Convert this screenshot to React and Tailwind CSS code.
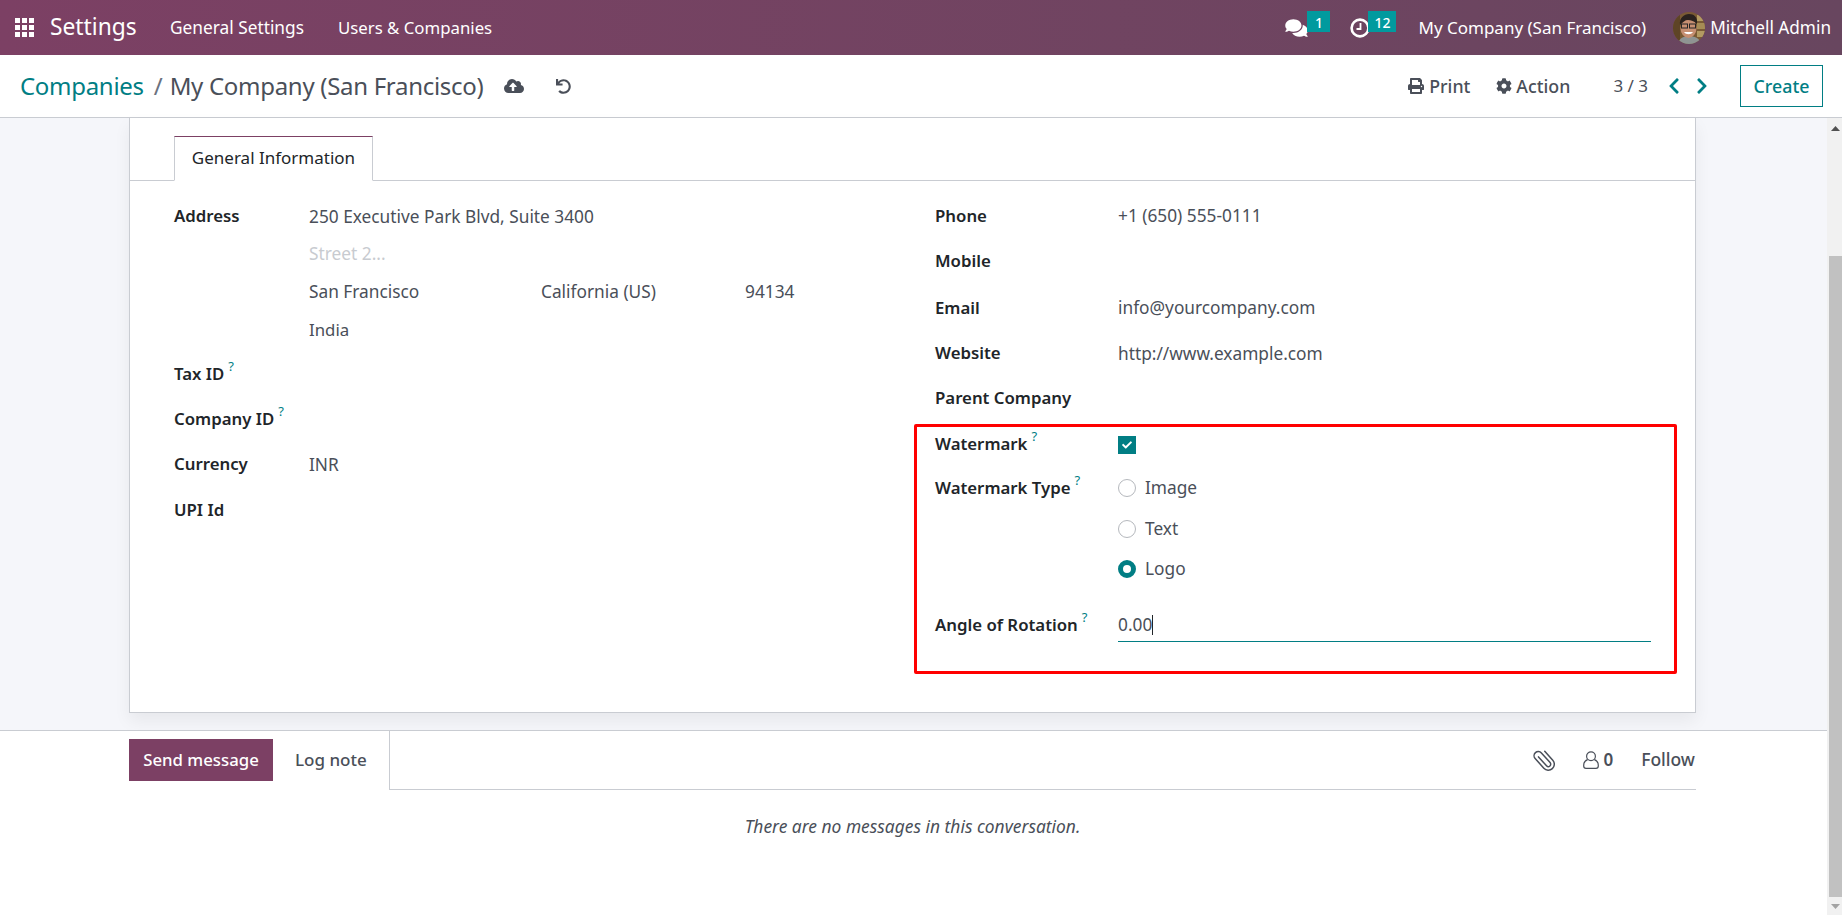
import React from 'react';
import { FaComments, FaPrint, FaCog, FaChevronLeft, FaChevronRight, FaCloudUploadAlt, FaUndo, FaCheck } from 'react-icons/fa';

const F = { fontFamily: '"Noto Sans", sans-serif' };

function Help() {
  return <sup className="text-[13px] font-normal text-[#017e84] ml-[4px] relative -top-[9px]">?</sup>;
}

function Avatar() {
  return (
    <svg viewBox="0 0 32 32" className="w-[32px] h-[32px] rounded-full mr-[5px]">
      <rect width="32" height="32" fill="#7a5a34" />
      <rect x="0" y="0" width="7" height="32" fill="#5e4426" />
      <rect x="24" y="3" width="8" height="6" fill="#b39a62" />
      <rect x="24" y="11" width="8" height="6" fill="#a68c55" />
      <rect x="24" y="19" width="8" height="6" fill="#b39a62" />
      <path d="M5 32c1-6 6-8 11-8s11 2 12 8z" fill="#8f9493" />
      <ellipse cx="15.5" cy="16" rx="8" ry="10" fill="#c68f72" />
      <path d="M7 13c-1-7 4-11 9-11s9 3 8 10c-3-3-6-4-9-4s-5 2-8 5z" fill="#2a221e" />
      <rect x="8.5" y="12" width="6" height="4" fill="none" stroke="#262626" strokeWidth="1" />
      <rect x="16.5" y="12" width="6" height="4" fill="none" stroke="#262626" strokeWidth="1" />
      <path d="M11 20c2 3 7 3 9 0z" fill="#fff" />
    </svg>
  );
}

function Badge({ children, className }) {
  return <span className={"absolute top-[11px] h-[21px] pt-[1px] bg-[#019a9e] text-white text-[14px] font-medium flex items-center justify-center " + className}>{children}</span>;
}

function ClockIcon({ className }) {
  return (
    <svg viewBox="0 0 20 20" className={className} fill="none" stroke="#fff">
      <circle cx="10" cy="10" r="8.4" strokeWidth="2.6" />
      <path d="M10.5 5v6H6.5" strokeWidth="1.8" />
    </svg>
  );
}

function ClipIcon({ className }) {
  return (
    <svg viewBox="0 0 20 24" className={className} fill="none" stroke="#4a4f59" strokeWidth="1.5" strokeLinecap="round">
      <path d="M8 6v12a2.4 2.4 0 0 0 4.8 0V5a4.2 4.2 0 0 0-8.4 0v13a6 6 0 0 0 12 0V6" transform="rotate(-42 10 12)" />
    </svg>
  );
}

function UserIcon({ className }) {
  return (
    <svg viewBox="0 0 16 18" className={className} fill="none" stroke="#4a4f59" strokeWidth="1.2">
      <circle cx="8" cy="5.2" r="4.4" />
      <path d="M4.6 8.6C2 9.6.7 11.5.7 14.4v.6A2.3 2.3 0 0 0 3 17.3h10a2.3 2.3 0 0 0 2.3-2.3v-.6c0-2.9-1.3-4.8-3.9-5.8" />
    </svg>
  );
}

function Navbar() {
  return (
    <header className="h-[55px] shrink-0 flex items-center text-white bg-gradient-to-r from-[#7c4064] to-[#68465f] text-[17.2px]">
      <svg viewBox="0 0 19 19" className="w-[19px] h-[19px] ml-[15px]" fill="#fff">
        <rect x="0" y="0" width="5" height="5" /><rect x="7" y="0" width="5" height="5" /><rect x="14" y="0" width="5" height="5" />
        <rect x="0" y="7" width="5" height="5" /><rect x="7" y="7" width="5" height="5" /><rect x="14" y="7" width="5" height="5" />
        <rect x="0" y="14" width="5" height="5" /><rect x="7" y="14" width="5" height="5" /><rect x="14" y="14" width="5" height="5" />
      </svg>
      <span className="ml-[16px] text-[22.8px] w-[120px]">Settings</span>
      <span className="w-[168px] text-[17.3px]">General Settings</span>
      <span className="text-[16.8px]">Users &amp; Companies</span>
      <div className="flex-1" />
      <div className="relative h-[55px] w-[65px]">
        <FaComments className="absolute left-0 top-[18px] w-[23px] h-[20px]" />
        <Badge className="left-[22px] w-[23px]">1</Badge>
      </div>
      <div className="relative h-[55px] w-[68px]">
        <ClockIcon className="absolute left-0 top-[18px] w-[20px] h-[20px]" />
        <Badge className="left-[18px] w-[28px]">12</Badge>
      </div>
      <span className="mr-[27px] text-[17px]">My Company (San Francisco)</span>
      <Avatar />
      <span className="mr-[11px]">Mitchell Admin</span>
    </header>
  );
}

function ControlPanel() {
  return (
    <div className="h-[63px] shrink-0 bg-white border-b border-[#c9ccd2] flex items-center text-[#4c4c4c]">
      <span className="ml-[20px] text-[24px] text-[#017e84] tracking-[-0.3px]">Companies</span>
      <span className="ml-[10px] text-[24px] text-[#6b7280]">/</span>
      <span className="ml-[7px] text-[24px] text-[#4a4f59] tracking-[-0.3px]">My Company (San Francisco)</span>
      <FaCloudUploadAlt className="ml-[21px] w-[20px] h-[18px] text-[#4a4f59]" />
      <FaUndo className="ml-[32px] w-[15px] h-[15px] text-[#4a4f59]" />
      <div className="flex-1" />
      <FaPrint className="w-[16px] h-[16px] text-[#4a4f59]" />
      <span className="ml-[5px] font-medium text-[17.8px] text-[#4a4f59]">Print</span>
      <FaCog className="ml-[26px] w-[16px] h-[16px] text-[#4a4f59]" />
      <span className="ml-[4px] font-medium text-[17.8px] text-[#4a4f59]">Action</span>
      <span className="ml-[43px] text-[17px] text-[#4a4f59]">3 / 3</span>
      <FaChevronLeft className="ml-[20px] w-[12px] h-[18px] text-[#017e84]" />
      <FaChevronRight className="ml-[16px] w-[12px] h-[18px] text-[#017e84]" />
      <button className="ml-[32px] mr-[19px] w-[83px] h-[42px] border border-[#017e84] text-[#017e84] font-medium text-[17.8px]">Create</button>
    </div>
  );
}

function Label({ children, help, className = "" }) {
  return <span className={"font-semibold text-[16.8px] text-[#212529] " + className}>{children}{help && <Help />}</span>;
}

function Row({ h, label, help, labelW, children, className = "" }) {
  return (
    <div className={"flex items-center " + h + " " + className}>
      <div className={labelW}><Label help={help}>{label}</Label></div>
      <div className="text-[17.3px] text-[#4a4f59] flex-1 pt-[1px]">{children}</div>
    </div>
  );
}

function Radio({ on }) {
  if (on) return <span className="w-[18px] h-[18px] rounded-full border-[5px] border-[#017e84] bg-white" />;
  return <span className="w-[18px] h-[18px] rounded-full border border-[#b5b8bd] bg-white" />;
}

function RadioRow({ h, on, children }) {
  return (
    <div className={"flex items-center gap-[9px] " + h}>
      <Radio on={on} />
      <span>{children}</span>
    </div>
  );
}

function Sheet() {
  const lw = "w-[135px]";
  const rw = "w-[183px]";
  return (
    <div className="flex-1 bg-white border-x border-b border-[#c9ccd2] shadow-[0_8px_16px_rgba(0,0,0,0.06)]">
      <div className="h-[63px] flex items-end border-b border-[#c9ccd2] pl-[44px]">
        <div className="w-[199px] h-[45px] -mb-px bg-white border-x border-b border-b-white border-x-[#c9ccd2] border-t border-t-[#7c4064] flex items-center justify-center pb-[2px] text-[17px] text-[#212529]">General Information</div>
      </div>
      <div className="flex">
        <div className="w-[805px] pl-[44px] pt-[16px] pr-[40px] shrink-0">
          <div className="flex h-[38px] items-center">
            <div className={lw}><Label>Address</Label></div>
            <span className="text-[17.3px] text-[#4a4f59] pt-[1px]">250 Executive Park Blvd, Suite 3400</span>
          </div>
          <div className="flex h-[38px] items-center">
            <div className={lw} />
            <span className="text-[17.3px] text-[#c8cbd0]">Street 2...</span>
          </div>
          <div className="flex h-[37px] items-center text-[17.3px] text-[#4a4f59]">
            <div className={lw} />
            <span className="w-[232px]">San Francisco</span>
            <span className="w-[204px]">California (US)</span>
            <span>94134</span>
          </div>
          <div className="flex h-[38px] items-center text-[17.3px] text-[#4a4f59] mb-[3px]">
            <div className={lw} />
            <span className="pt-[1px] text-[16.8px]">India</span>
          </div>
          <Row h="h-[45px]" label="Tax ID" help labelW={lw} />
          <Row h="h-[45px]" label="Company ID" help labelW={lw} />
          <Row h="h-[46px]" label="Currency" labelW={lw}>INR</Row>
          <Row h="h-[45px]" label="UPI Id" labelW={lw} />
        </div>
        <div className="flex-1 pt-[12px] pr-[44px] relative">
          <Row h="h-[45px]" label="Phone" labelW={rw}>+1 (650) 555-0111</Row>
          <Row h="h-[46px]" label="Mobile" labelW={rw} />
          <Row h="h-[47px]" label="Email" labelW={rw}>info@yourcompany.com</Row>
          <Row h="h-[44px]" label="Website" labelW={rw}>http://www.example.com</Row>
          <Row h="h-[45px]" label="Parent Company" labelW={rw} />
          <Row h="h-[46px]" label="Watermark" help labelW={rw} className="pt-[2px]">
            <span className="w-[18px] h-[18px] bg-[#017e84] flex items-center justify-center">
              <FaCheck className="w-[10px] h-[10px] text-white" />
            </span>
          </Row>
          <div className="flex">
            <div className={rw + " h-[44px] flex items-center"}><Label help>Watermark Type</Label></div>
            <div className="flex-1 text-[17.3px] text-[#4a4f59]">
              <RadioRow h="h-[44px]" >Image</RadioRow>
              <RadioRow h="h-[38px]" >Text</RadioRow>
              <RadioRow h="h-[42px]" on>Logo</RadioRow>
            </div>
          </div>
          <div className="flex mt-[18px]">
            <div className={rw + " h-[34px] flex items-center"}><Label help>Angle of Rotation</Label></div>
            <div className="flex-1 h-[34px] flex items-center border-b border-[#017e84] text-[17.3px] text-[#4a4f59]">
              <span>0.00</span><span className="w-px h-[20px] bg-[#212529]" />
            </div>
          </div>
          <div className="absolute left-[-21px] right-[18px] top-[243px] h-[250px] border-[3px] border-[#ff0000] rounded-[2px]" />
        </div>
      </div>
    </div>
  );
}

function Chatter() {
  return (
    <div className="h-[185px] shrink-0 bg-white border-t border-[#c9ccd2] pl-[129px] pr-[131px] text-[17px]">
      <div className="h-[59px] flex border-b border-[#c9ccd2]">
        <div className="flex items-start border-r border-[#c9ccd2] bg-white -mb-px pt-[8px] h-[59px] w-[261px]">
          <button className="w-[144px] h-[42px] bg-[#7c4064] text-white text-[16.8px] font-medium">Send message</button>
          <span className="ml-[22px] h-[42px] flex items-center font-medium text-[#4a4f59]">Log note</span>
        </div>
        <div className="flex-1 flex items-center justify-end h-[57px] text-[#4a4f59]">
          <ClipIcon className="w-[22px] h-[24px]" />
          <UserIcon className="ml-[28px] w-[16px] h-[18px]" />
          <span className="ml-[4px] font-semibold">0</span>
          <span className="ml-[28px] mr-[1px] font-medium text-[17.5px]">Follow</span>
        </div>
      </div>
      <div className="text-center italic text-[#4a4f59] text-[17.4px] mt-[23px]">There are no messages in this conversation.</div>
    </div>
  );
}

function Scrollbar() {
  return (
    <div className="w-[15px] shrink-0 bg-[#f1f1f1] flex flex-col">
      <div className="h-[15px] flex items-start justify-center pt-[8px]">
        <svg viewBox="0 0 9 5" className="w-[9px] h-[5px] ml-[2px]"><path d="M4.5 0L9 5H0z" fill="#505050" /></svg>
      </div>
      <div className="mt-[123px] ml-[2px] flex-1 bg-[#c1c1c1]" />
      <div className="h-[18px] flex items-center justify-center">
        <svg viewBox="0 0 9 5" className="w-[9px] h-[5px] ml-[2px]"><path d="M4.5 5L9 0H0z" fill="#a3a3a3" /></svg>
      </div>
    </div>
  );
}

export default function App() {
  return (
    <div className="h-[915px] w-[1842px] overflow-hidden flex flex-col bg-white" style={F}>
      <Navbar />
      <ControlPanel />
      <div className="flex-1 flex min-h-0">
        <div className="flex-1 flex flex-col min-w-0">
          <div className="flex-1 bg-[#f5f6fa] pl-[129px] pr-[131px] pb-[17px] flex flex-col min-h-0">
            <Sheet />
          </div>
          <Chatter />
        </div>
        <Scrollbar />
      </div>
    </div>
  );
}
